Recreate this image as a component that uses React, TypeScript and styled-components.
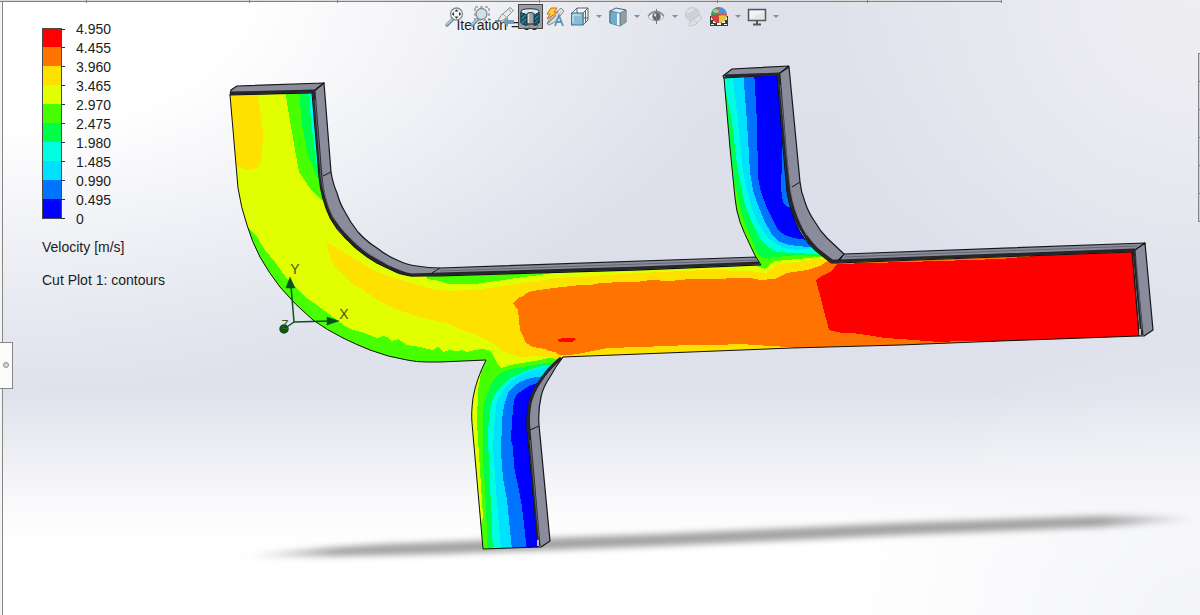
import React from "react";
import styled, { createGlobalStyle } from "styled-components";

const GlobalStyle = createGlobalStyle`
  * { box-sizing: border-box; }
  body { margin: 0; font-family: "Liberation Sans", Arial, sans-serif; font-size: 14px; color: #1c1c1c; }
`;

const color = {
  red: "#ff0000",
  orange: "#ff7300",
  yellow: "#ffe100",
  lime: "#e1ff00",
  green: "#48ff00",
  emerald: "#00ff48",
  aqua: "#00ffe1",
  sky: "#00e1ff",
  blue: "#0073ff",
  navy: "#0000ff",
};

const Window = styled.div`
  position: relative;
  min-height: 100vh;
  display: flex;
  flex-direction: column;
  overflow: hidden;
  isolation: isolate;
  background:
    radial-gradient(ellipse 62% 64% at 0% 0%, #ffffff 0%, #ffffff 32%, rgba(255, 255, 255, 0) 100%),
    radial-gradient(ellipse 32% 62% at 100% 0%, #eeeef1 0%, rgba(236, 236, 242, 0.9) 35%, rgba(236, 236, 242, 0) 100%),
    radial-gradient(ellipse 30% 45% at 100% 100%, #f3f4f8 0%, rgba(243, 244, 248, 0) 100%),
    linear-gradient(180deg, #dfe1ea 0%, #dcdfea 42%, #dfe2ec 64%, #eeeff4 74%, #fafafc 82%, #ffffff 89%);
`;

const Scene = styled.svg`
  position: absolute;
  inset: 0;
  width: 100%;
  height: 100%;
  z-index: -1;
`;

const TabEdge = styled.header`
  display: flex;
  width: 84%;
  max-width: calc(100% - 198px);
  height: 2px;
  background: #d9dad9;
  border-bottom: 1px solid #7f8280;
`;

const TabStub = styled.span<{ $grow: number }>`
  flex: ${(p) => p.$grow} 1 0;
  height: 3px;
  border-right: 1px solid #7f8280;
`;

const Body = styled.div`
  flex: 1;
  display: flex;
`;

const Rail = styled.aside`
  flex: none;
  width: 3px;
  display: flex;
  flex-direction: column;
  background: #f4f4f4;
  border-right: 1px solid #868686;
  &::before { content: ""; flex: 3; }
  &::after { content: ""; flex: 2; }
`;

const RailHandle = styled.button`
  flex: none;
  width: 13px;
  height: 47px;
  padding: 0;
  display: grid;
  place-items: center;
  background: #fbfbfb;
  border: 1px solid #868686;
  border-left: 0;
`;

const HandleDot = styled.span`
  width: 6px;
  height: 6px;
  border: 1px solid #909090;
  border-radius: 50%;
  background: #d6d6d6;
`;

const Viewport = styled.main`
  flex: 1;
  min-width: 0;
  display: grid;
  grid-template-columns: 1fr;
  align-content: start;
`;

const Toolbar = styled.div`
  grid-area: 1 / 1;
  height: 28px;
  padding: 2px 0 0 24px;
  display: flex;
  justify-content: center;
`;

const Iteration = styled.p`
  grid-area: 1 / 1;
  justify-self: center;
  margin: 0 206px 0 0;
  padding-top: 14px;
  line-height: 18px;
  white-space: nowrap;
`;

const Tool = styled.button<{ $active?: boolean }>`
  width: 25px;
  height: 25px;
  padding: 0;
  display: grid;
  place-items: center;
  background: ${(p) => (p.$active ? "rgba(140, 142, 144, 0.85)" : "transparent")};
  border: ${(p) => (p.$active ? "1px solid #454545" : "0")};
`;

const DropButton = styled.button`
  width: 13px;
  height: 25px;
  padding: 0;
  display: grid;
  place-items: center;
  border: 0;
  background: transparent;
  &::after {
    content: "";
    border: 3px solid transparent;
    border-top-color: #8b8d90;
    border-bottom: 0;
  }
`;

const Icon = styled.svg`
  width: 22px;
  height: 22px;
  display: block;
  overflow: visible;
`;

const LegendPanel = styled.section`
  grid-area: 2 / 1;
  width: 200px;
  margin-left: 39px;
  margin-top: -14px;
`;

const ScaleRow = styled.div`
  display: flex;
  gap: 11px;
`;

const ColorBar = styled.div`
  width: 23px;
  margin-top: 8px;
  display: flex;
  flex-direction: column;
`;

const ColorCell = styled.span<{ $fill: string }>`
  height: 19px;
  position: relative;
  margin-right: 3px;
  border: 1px solid #4a4a4a;
  border-top: 0;
  border-bottom: 0;
  background: ${(p) => p.$fill};
  &:first-child { border-top: 1px solid #4a4a4a; }
  &:last-child { height: 20px; border-bottom: 1px solid #4a4a4a; }
  &::before, &:last-child::after {
    content: "";
    position: absolute;
    left: 100%;
    top: 0;
    width: 4px;
    height: 1px;
    background: #333;
  }
  &:last-child::after { top: auto; bottom: -1px; }
`;

const ScaleLabels = styled.ol`
  list-style: none;
  margin: 0;
  padding: 0;
  line-height: 19px;
`;

const LegendText = styled.p<{ $gap: number }>`
  margin: 0;
  line-height: 19px;
  padding-top: ${(p) => p.$gap}px;
`;

const TaskPane = styled.aside`
  flex: none;
  width: 2px;
  margin-top: 51px;
  align-self: flex-start;
  border-left: 1px solid #858585;
  border-top: 1px solid #858585;
`;

const TaskTab = styled.div`
  height: 28px;
  background: #cfcfcf;
  border-bottom: 1px solid #858585;
`;

const scale: [string, string][] = [
  [color.red, "4.950"],
  [color.orange, "4.455"],
  [color.yellow, "3.960"],
  [color.lime, "3.465"],
  [color.green, "2.970"],
  [color.emerald, "2.475"],
  [color.aqua, "1.980"],
  [color.sky, "1.485"],
  [color.blue, "0.990"],
  [color.navy, "0.495"],
];

const Lens = ({ dashed }: { dashed?: boolean }) => (
  <>
    {dashed && <rect x="6" y="1" width="14" height="13" fill="none" stroke="#777" strokeDasharray="3 2" />}
    <path d="M8.5 13.5 3 19" stroke="#6f93a8" strokeWidth="3.4" strokeLinecap="round" />
    <path d="M8 13.5 3 18.3" stroke="#b3d3e3" strokeWidth="1.3" strokeLinecap="round" />
    <circle cx="12.5" cy="8" r={dashed ? 5.5 : 6} fill={dashed ? "#cfe0ea" : "#f2f6f8"} stroke="#848b90" strokeWidth="1.3" />
  </>
);

const FitIcon = () => (
  <Icon viewBox="0 0 22 22">
    <Lens />
    <path d="M12.5 3.2l2 2.3h-4zM12.5 12.8l2-2.3h-4zM7.7 8l2.3-2v4zM17.3 8 15 6v4z" fill="#333" />
  </Icon>
);

const AreaIcon = () => (
  <Icon viewBox="0 0 22 22"><Lens dashed /></Icon>
);

const PreviousIcon = () => (
  <Icon viewBox="0 0 22 22">
    <path d="M16 1.5 19.500 4.5 12 12 8 15 4 14.5 7 9.5z" fill="#e9ecee" stroke="#858b8f" />
    <path d="M9 8l4 4M14.500 3l3 3.500" stroke="#9fa6aa" />
    <path d="M1 15h6" stroke="#7e8c94" strokeWidth="2" />
    <path d="M9 15.500l5-4.500v3h6v4h-6v3z" fill="#6c9fbd" />
  </Icon>
);

const SectionIcon = () => (
  <Icon viewBox="0 0 22 22">
    <path d="M2 5c0-3 18-3 18 0v11c0 2-4 3-5 3V9H8v10c-2 0-6-1-6-3z" fill="#dceaf1" stroke="#23333c" />
    <path d="M2 6.5 8 9v10c-3 0-6-1-6-3zM20 6.5 15 9v10c3 0 5-1 5-3z" fill="#2586b4" stroke="#173646" />
    <path d="M2.5 11 6 7.5M3 15l5-5M4.5 18 8 14.5M15 12l4-4M15 16l5-5M16 18.5l4-4" stroke="#123a50" strokeWidth="1.2" />
    <path d="M8 8c0-2 7-2 7 0v10H8z" fill="#9da2a5" stroke="#2b2b2b" />
    <path d="M9.5 8v9" stroke="#dcdcdc" strokeWidth="1.5" />
  </Icon>
);

const AnnotationIcon = () => (
  <Icon viewBox="0 0 22 22">
    <path d="M17 2l3 3-9 11-6 3-2-2 4-6z" fill="#d7dcdf" stroke="#858b8f" />
    <path d="M3 18l9-9" stroke="#8c9397" strokeWidth="1.5" />
    <path d="M7 2h6l-3 4h4L3 13l3-5H3z" fill="#ffd23a" stroke="#d9671d" />
    <path d="M11 20 15 9.500 19 20M12.500 16h5" fill="none" stroke="#5f93b4" strokeWidth="1.8" />
  </Icon>
);

const OrientationIcon = () => (
  <Icon viewBox="0 0 22 22">
    <path d="M3 7 8 2h11v12l-5 5" fill="#f5f6f7" stroke="#59656c" />
    <path d="M14 7l5-5M14 19V7M8 2v5M14 12h5M16.5 4.5v12" fill="none" stroke="#59656c" />
    <rect x="2.5" y="7" width="11.5" height="12" fill="#86bcd4" stroke="#3f7690" />
    <path d="M4 17V9h8" fill="none" stroke="#b9dce9" strokeWidth="1.5" />
  </Icon>
);

const DisplayIcon = () => (
  <Icon viewBox="0 0 22 22">
    <path d="M3 5 9 2l10 2v12l-6 4-10-3z" fill="#d9edf5" stroke="#49626f" />
    <path d="M3 5l7 2v12l-7-2z" fill="#6daecd" />
    <path d="M10 7l3 .5V20l-3-1z" fill="#e6f5fa" />
    <path d="M13 7.5 19 4v12l-6 4z" fill="#919da5" />
    <path d="M3 5l10 2.2L19 4M13 7.200V20M3 5v12" fill="none" stroke="#49626f" strokeWidth=".8" />
  </Icon>
);

const VisibilityIcon = () => (
  <Icon viewBox="0 0 22 22">
    <path d="M3 11c4-6 12-6 16 0-4 5-12 5-16 0z" fill="#eeefef" stroke="#a9abad" />
    <path d="M3 10c4-6 12-6 16 0" fill="none" stroke="#888b8d" strokeWidth="1.3" />
    <circle cx="11.5" cy="10.5" r="4.2" fill="#66696b" />
    <circle cx="10.5" cy="9" r="1.5" fill="#e6e6e6" />
    <path d="M11.5 3v15" stroke="#777b7d" />
  </Icon>
);

const AppearanceIcon = () => (
  <Icon viewBox="0 0 22 22" opacity=".6">
    <circle cx="9.5" cy="8.5" r="7" fill="#c4c6c9" stroke="#b8babc" />
    <path d="M4 6c3 0 4-2 6-3" fill="none" stroke="#e6e7e9" strokeWidth="2" />
    <path d="M7 16 16 9l3 3-7 7-6 1z" fill="#dddee0" stroke="#aeb0b2" />
    <path d="M11 14l3 3" stroke="#aeb0b2" />
  </Icon>
);

const SceneIcon = () => (
  <Icon viewBox="0 0 22 22">
    <path d="M2 10h18v10H2z" fill="#3a3a3a" />
    <path d="M3 11h3v3H3zM16 11h3v3h-3zM5 15h3v2H5zM14 15h3v2h-3zM9 17h4v2H9zM3 18h3v1H3zM16 18h3v1h-3z" fill="#f4f4f4" />
    <path d="M11 9V1a8 8 0 0 0-8 8z" fill="#3f9a55" />
    <path d="M11 9V1a8 8 0 0 1 8 8z" fill="#5591d4" />
    <path d="M11 9v8a8 8 0 0 0 8-8z" fill="#e9c33a" />
    <path d="M11 9v8a8 8 0 0 1-8-8z" fill="#d1423b" />
    <path d="M11 2c-2 2-2 5 0 7 4-1 6 0 8 0" fill="none" stroke="#cf554a" strokeWidth="1.5" />
    <ellipse cx="8" cy="5" rx="3" ry="2" fill="#fff" opacity=".45" />
  </Icon>
);

const MonitorIcon = () => (
  <Icon viewBox="0 0 22 22">
    <rect x="2.5" y="3.5" width="17" height="11" fill="#e4e6e8" stroke="#54585b" strokeWidth="1.5" />
    <path d="M4 5h14l-14 8z" fill="#f3f4f5" />
    <path d="M11 15v3M7 18.5h8" stroke="#54585b" strokeWidth="2" />
  </Icon>
);

const bodyOutline =
  "M230 95 312 93 319 177Q321 199 330 218 337 231 345 238 355 249 367 257 377 264 387 268 399 275 410 276L440 276 640 270 761 265Q755 257 750 245 744 233 740 222 736 210 735 198L730 148 724 78 777 75 783 148 787 192Q790 212 800 232 809 246 817 252L831 263 837 263 1132 252 1139 336 1000 341 900 345 792 348 640 354 563 357Q553 365 547 373 541 380 537 387 530 396 528 407 526 418 527 430L538 547 483 549 472 423Q471 413 473 398 476 380 486 360L440 362 427 362Q416 362 407 360 388 357 370 350 355 344 343 338 327 330 313 320 295 305 280 287 269 273 260 257 252 242 247 225 241 208 238 188Z";

const contours: [string, string][] = [
  // inlet elbow
  [color.yellow, "228 90 257 90 258 96 263 132 262 158 260 164 257 168 248 170 241 168 236 165"],
  [color.green, "285 90 330 90 330 208 322 200 314 193 307 184 299 172 295 150 289 115"],
  [color.emerald, "299 90 325 90 325 190 318 179 308 155 302 125"],
  [color.aqua, "308 90 325 90 325 175 316 162 312 130"],
  [color.green, "240 218 248 227 257 237 265 250 275 262 285 276 295 287 305 297 317 305 333 317 345 326 353 330 361 332 367 334 377 338 383 336 387 337 392 341 398 339 407 345 420 347 433 350 438 347 443 352 449 350 457 351 462 350 467 352 475 350 482 349 488 350 493 355 497 363 501 368 510 365 540 360 556 356 570 362 550 560 470 560 460 370 400 370 330 350 270 300"],
  // main run
  [color.green, "425 270 427 279 440 281 448 284 460 284 475 284 490 282 510 279 523 277 540 275 560 272 560 265"],
  [color.yellow, "326 242 335 247 353 258 377 272 393 277 407 282 433 289 450 291 470 290 490 288 508 285 523 283 557 278 607 275 640 273 707 270 750 271 765 273 772 269 778 264 797 262 832 258 840 260 1000 250 1000 350 640 360 563 360 540 356 520 357 512 355 505 352 498 348 494 344 490 342 477 335 457 328 450 324 433 320 420 317 407 313 394 308 383 303 370 295 360 288 349 281 340 272 334 265 330 257"],
  [color.orange, "513 303 520 297 523 296 526 293 533 291 553 288 580 285 590 285 600 283 623 282 637 282 650 280 670 281 690 279 717 279 735 278 750 278 760 280 775 279 787 273 807 270 820 266 832 258 1140 245 1140 350 800 349 790 347 770 346 740 344 715 345 690 345 640 347 607 348 597 350 587 352 578 354 567 355 560 355 555 352 549 351 545 349 533 347 526 343 523 336 520 330 519 320 518 310"],
  [color.red, "816 280 822 276 832 271 837 264 940 261 1000 259 1070 253 1145 248 1145 340 1000 342 960 341 940 342 900 339 885 338 873 336 853 333 842 333 829 330"],
  [color.red, "557 340 562 338 573 338 577 339 572 342 560 342"],
  // upper branch
  [color.lime, "720 70 785 70 835 258 797 261 778 263 772 267 766 273 758 272 750 270 745 262"],
  [color.green, "720 70 785 70 832 256 797 259 775 261 769 265 765 269 757 266 740 245"],
  [color.emerald, "724 80 785 70 830 257 800 255 775 257 769 258 762 258 757 252 750 236 743 218 735 185 728 130 724 110"],
  [color.aqua, "720 70 785 70 825 254 813 254 777 252 768 247 760 238 752 223 745 205 737 165 732 122 727 96 724 85"],
  [color.sky, "732 70 785 70 822 250 813 248 797 250 783 248 775 243 767 237 759 225 753 212 747 191 743 172 738 122"],
  [color.blue, "743 70 785 70 814 247 807 247 790 245 780 242 772 235 764 220 758 205 753 190 750 172 747 122"],
  [color.navy, "754 70 785 70 812 242 808 240 793 238 785 235 778 230 772 218 767 208 761 192 758 178 757 122"],
  [color.blue, "783 132 792 132 792 208 788 207 783 203 781 188 782 160"],
  // lower branch
  [color.lime, "466 372 481 372 480 380 478 390 477 423 480 470 483 517 478 535"],
  [color.emerald, "562 361 540 364 523 367 511 369 500 373 494 379 490 387 485 400 483 414 483 457 486 507 488 560 560 560"],
  [color.aqua, "560 363 537 367 523 372 511 378 500 387 494 396 490 407 488 433 489 470 492 520 493 560 560 560"],
  [color.sky, "555 365 543 368 530 371 520 375 510 382 503 390 497 401 495 414 493 447 496 490 502 560 560 560"],
  [color.blue, "545 376 530 378 520 382 513 387 508 393 504 406 502 420 501 453 503 478 507 500 513 560 560 560"],
  [color.navy, "545 382 537 383 529 386 523 390 517 394 514 400 512 420 511 440 513 446 514 467 519 490 522 507 528 560 560 560"],
];

const solids = [
  "231 90 237 86 324 83 315 90 313 93 230 95",
  "723 76 732 69 789 66 780 73 777 76 724 78",
  "838 262 844 254 1145 243 1135 251",
];

const Model = () => (
  <Scene viewBox="0 0 1200 615" preserveAspectRatio="xMidYMid meet" role="img" aria-label="Velocity contours in a branched duct">
    <defs>
      <clipPath id="cut"><path d={bodyOutline} /></clipPath>
      <filter id="soft" x="-10%" y="-100%" width="120%" height="300%"><feGaussianBlur stdDeviation="6 3" /></filter>
      <linearGradient id="ground" x1="240" x2="1195" y1="0" y2="0" gradientUnits="userSpaceOnUse">
        <stop offset="0" stopColor="#999" stopOpacity="0" />
        <stop offset=".1" stopColor="#999" stopOpacity=".9" />
        <stop offset=".9" stopColor="#999" stopOpacity=".9" />
        <stop offset="1" stopColor="#999" stopOpacity=".1" />
      </linearGradient>
    </defs>

    <path d="M235 557Q330 545 440 542L660 534 900 523 1100 516Q1150 515 1195 519 1150 524 1100 527L900 535 660 546 440 554Q330 557 235 557Z" fill="url(#ground)" filter="url(#soft)" />

    <g fill="#8a8c9c" stroke="#17181c" strokeWidth="1.2" strokeLinejoin="round">
      {solids.map((points) => <polygon key={points} points={points} />)}
      <path d="M312 93 324 83 331 172Q333 184 337 193 340 204 345 212 350 222 358 232 367 242 377 248 387 256 397 260 407 265 417 266 428 268 440 268L757 257 761 265 640 270 440 276 410 276Q387 270 367 257 345 240 330 218 321 200 319 177Z" />
      <path d="M777 75 789 67 800 182Q801 192 805 202 808 212 815 222 820 231 827 238L844 254 837 263 831 263 817 252Q800 235 790 205 787 192 783 148Z" />
      <path d="M1132 252 1145 243 1153 330 1144 336 1139 336Z" />
      <path d="M563 357Q556 366 550 377 543 387 541 397 538 410 539 425L550 541 541 547 537 547 527 430Q526 400 537 387 548 368 563 357Z" />
    </g>

    <g clipPath="url(#cut)" shapeRendering="crispEdges">
      <path d={bodyOutline} fill={color.lime} />
      {contours.map(([fill, points]) => <polygon key={points} points={points} fill={fill} />)}
    </g>
    <path d={bodyOutline} fill="none" stroke="#101010" strokeWidth="1" />

    <g fill="none" stroke="#25262b" strokeWidth="3" strokeLinejoin="round">
      <path d="M231 93 314 91 321 177Q323 199 331 216 338 228 347 237 357 248 369 256 379 262 389 267 401 273 412 275L440 274 640 268 759 263" />
      <path d="M725 76 779 74 785 148 789 190Q792 212 802 230 810 243 819 251L832 261 838 261 1134 250 1142 335" />
      <path d="M561 358Q550 367 543 377 530 394 529 410 528 420 529 430L539 546" />
    </g>
    <g fill="none" stroke="#787a86" strokeWidth=".7">
      <path d="M315 100 321 177Q325 201 333 217 351 245 390 266M780 85 787 160 791 193Q796 217 807 236M1136 256 1142 330M530 440 539 540" />
    </g>
    <g fill="none" stroke="#17181c" strokeWidth="1">
      <path d="M323 176 331 172M432 273 440 268M315 90 324 83M792 187 800 182M837 261 844 254M1135 250 1145 243M530 430 539 426" />
      <path d="M440 271 757 260M845 257 1137 246" stroke="#55575f" strokeWidth=".7" />
    </g>
    <path d="M1140 329v6M538 540v6" stroke="#bfc3b5" strokeWidth="2" />

    <g stroke="#07551c" fill="#07551c" strokeWidth="1.5">
      <path d="M284 329 294 322 291 286M294 322 330 321" fill="none" />
      <path d="M290 277 286 288 295 288ZM339 321 327 317 327 325Z" strokeWidth=".5" />
      <circle cx="284" cy="329" r="4" />
    </g>
    <g fill="#3f5c1c" fontFamily="Liberation Sans, Arial, sans-serif" fontSize="14" textAnchor="middle">
      <text x="295" y="274">Y</text>
      <text x="344" y="319">X</text>
      <text x="285" y="329" fontSize="12">Z</text>
    </g>
  </Scene>
);

export default function App() {
  return (
    <>
      <GlobalStyle />
      <Window>
        <Model />
        <TabEdge>
          {[87, 163, 87, 203, 178, 150, 134].map((grow, i) => <TabStub key={i} $grow={grow} />)}
        </TabEdge>
        <Body>
          <Rail><RailHandle aria-label="Expand panel"><HandleDot /></RailHandle></Rail>
          <Viewport>
            <Iteration>Iteration = 99</Iteration>
            <Toolbar role="toolbar" aria-label="View">
              <Tool aria-label="Zoom to fit"><FitIcon /></Tool>
              <Tool aria-label="Zoom to area"><AreaIcon /></Tool>
              <Tool aria-label="Previous view"><PreviousIcon /></Tool>
              <Tool aria-label="Section view" aria-pressed="true" $active><SectionIcon /></Tool>
              <Tool aria-label="Annotation views"><AnnotationIcon /></Tool>
              <Tool aria-label="View orientation"><OrientationIcon /></Tool>
              <DropButton aria-label="Orientation options" />
              <Tool aria-label="Display style"><DisplayIcon /></Tool>
              <DropButton aria-label="Display options" />
              <Tool aria-label="Hide or show items"><VisibilityIcon /></Tool>
              <DropButton aria-label="Visibility options" />
              <Tool aria-label="Edit appearance" disabled><AppearanceIcon /></Tool>
              <Tool aria-label="Apply scene"><SceneIcon /></Tool>
              <DropButton aria-label="Scene options" />
              <Tool aria-label="View settings"><MonitorIcon /></Tool>
              <DropButton aria-label="View setting options" />
            </Toolbar>
            <LegendPanel>
              <ScaleRow>
                <ColorBar>
                  {scale.map(([fill]) => <ColorCell key={fill} $fill={fill} />)}
                </ColorBar>
                <ScaleLabels>
                  {scale.map(([, label]) => <li key={label}>{label}</li>)}
                  <li>0</li>
                </ScaleLabels>
              </ScaleRow>
              <LegendText $gap={9}>Velocity [m/s]</LegendText>
              <LegendText $gap={14}>Cut Plot 1: contours</LegendText>
            </LegendPanel>
          </Viewport>
          <TaskPane>
            {[0, 1, 2, 3, 4, 5].map((n) => <TaskTab key={n} />)}
          </TaskPane>
        </Body>
      </Window>
    </>
  );
}
